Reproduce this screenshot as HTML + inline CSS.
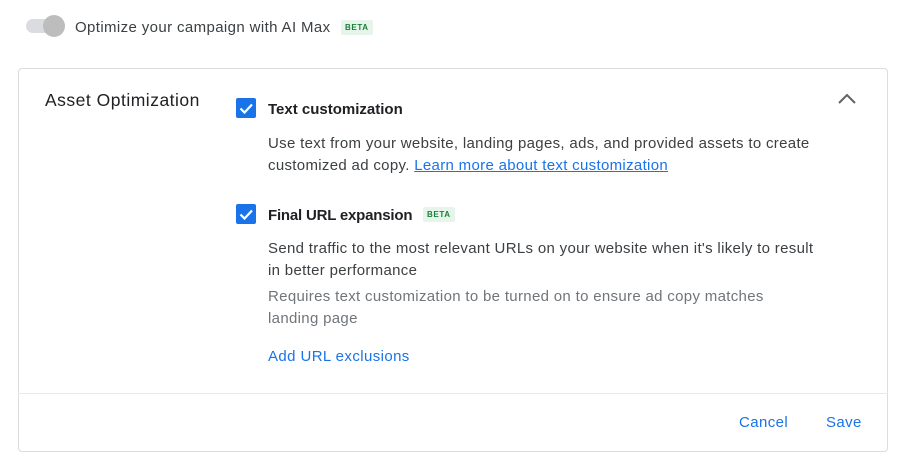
<!DOCTYPE html>
<html><head><style>
*{box-sizing:border-box;margin:0;padding:0}
body{width:900px;height:460px;background:#fff;font-family:"Liberation Sans",Arial,sans-serif;color:#202124;position:relative;overflow:hidden}
.abs{position:absolute;white-space:nowrap}
.beta{position:absolute;background:#e6f4ea;color:#188038;font-size:8px;letter-spacing:.6px;font-weight:bold;padding:3px 4px;border-radius:2px}
.cb{position:absolute;width:20px;height:20px;background:#1a73e8;border-radius:2px}
.t{font-size:15px;color:#3c4043;letter-spacing:.32px}
.g{color:#70757a}
a{color:#1a73e8}
.blue{color:#1a73e8;font-size:15px;letter-spacing:.4px}
</style></head><body>
<div class="abs" style="left:26px;top:19px;width:36px;height:14px;border-radius:7px;background:#dadce0"></div>
<div class="abs" style="left:43px;top:15px;width:22px;height:22px;border-radius:50%;background:#bdbdbd"></div>
<div class="abs" style="left:75px;top:19px;font-size:15px;color:#3c4043;letter-spacing:.38px">Optimize your campaign with AI Max</div>
<div class="beta" style="left:341px;top:20px">BETA</div>

<div class="abs" style="left:18px;top:68px;width:870px;height:384px;border:1px solid #dadce0;border-radius:4px"></div>
<div class="abs" style="left:18px;top:393px;width:870px;height:1px;background:#e8eaed"></div>

<div class="abs" style="left:45px;top:90px;font-size:17.5px;letter-spacing:.5px">Asset Optimization</div>
<svg class="abs" style="left:836px;top:90px" width="22" height="16" viewBox="0 0 22 16"><path d="M3 13 L11 5 L19 13" fill="none" stroke="#5f6368" stroke-width="2"/></svg>

<div class="cb" style="left:236px;top:98px"><svg width="20" height="20"><path d="M4.5 10.5 L8.5 14.5 L16 6.5" fill="none" stroke="#fff" stroke-width="2.2"/></svg></div>
<div class="abs" style="left:268px;top:101px;font-size:15px;font-weight:bold;color:#202124">Text customization</div>
<div class="abs t" style="left:268px;top:133px;line-height:22px">Use text from your website, landing pages, ads, and provided assets to create<br>customized ad copy. <a href="#">Learn more about text customization</a></div>

<div class="cb" style="left:236px;top:204px"><svg width="20" height="20"><path d="M4.5 10.5 L8.5 14.5 L16 6.5" fill="none" stroke="#fff" stroke-width="2.2"/></svg></div>
<div class="abs" style="left:268px;top:207px;font-size:15px;font-weight:bold;letter-spacing:-.2px">Final URL expansion</div>
<div class="beta" style="left:423px;top:207px">BETA</div>
<div class="abs t" style="left:268px;top:238px;line-height:22px">Send traffic to the most relevant URLs on your website when it's likely to result<br>in better performance</div>
<div class="abs t g" style="left:268px;top:286px;line-height:22px">Requires text customization to be turned on to ensure ad copy matches<br>landing page</div>
<div class="abs blue" style="left:268px;top:348px">Add URL exclusions</div>

<div class="abs blue" style="left:739px;top:414px">Cancel</div>
<div class="abs blue" style="left:826px;top:414px">Save</div>
</body></html>
